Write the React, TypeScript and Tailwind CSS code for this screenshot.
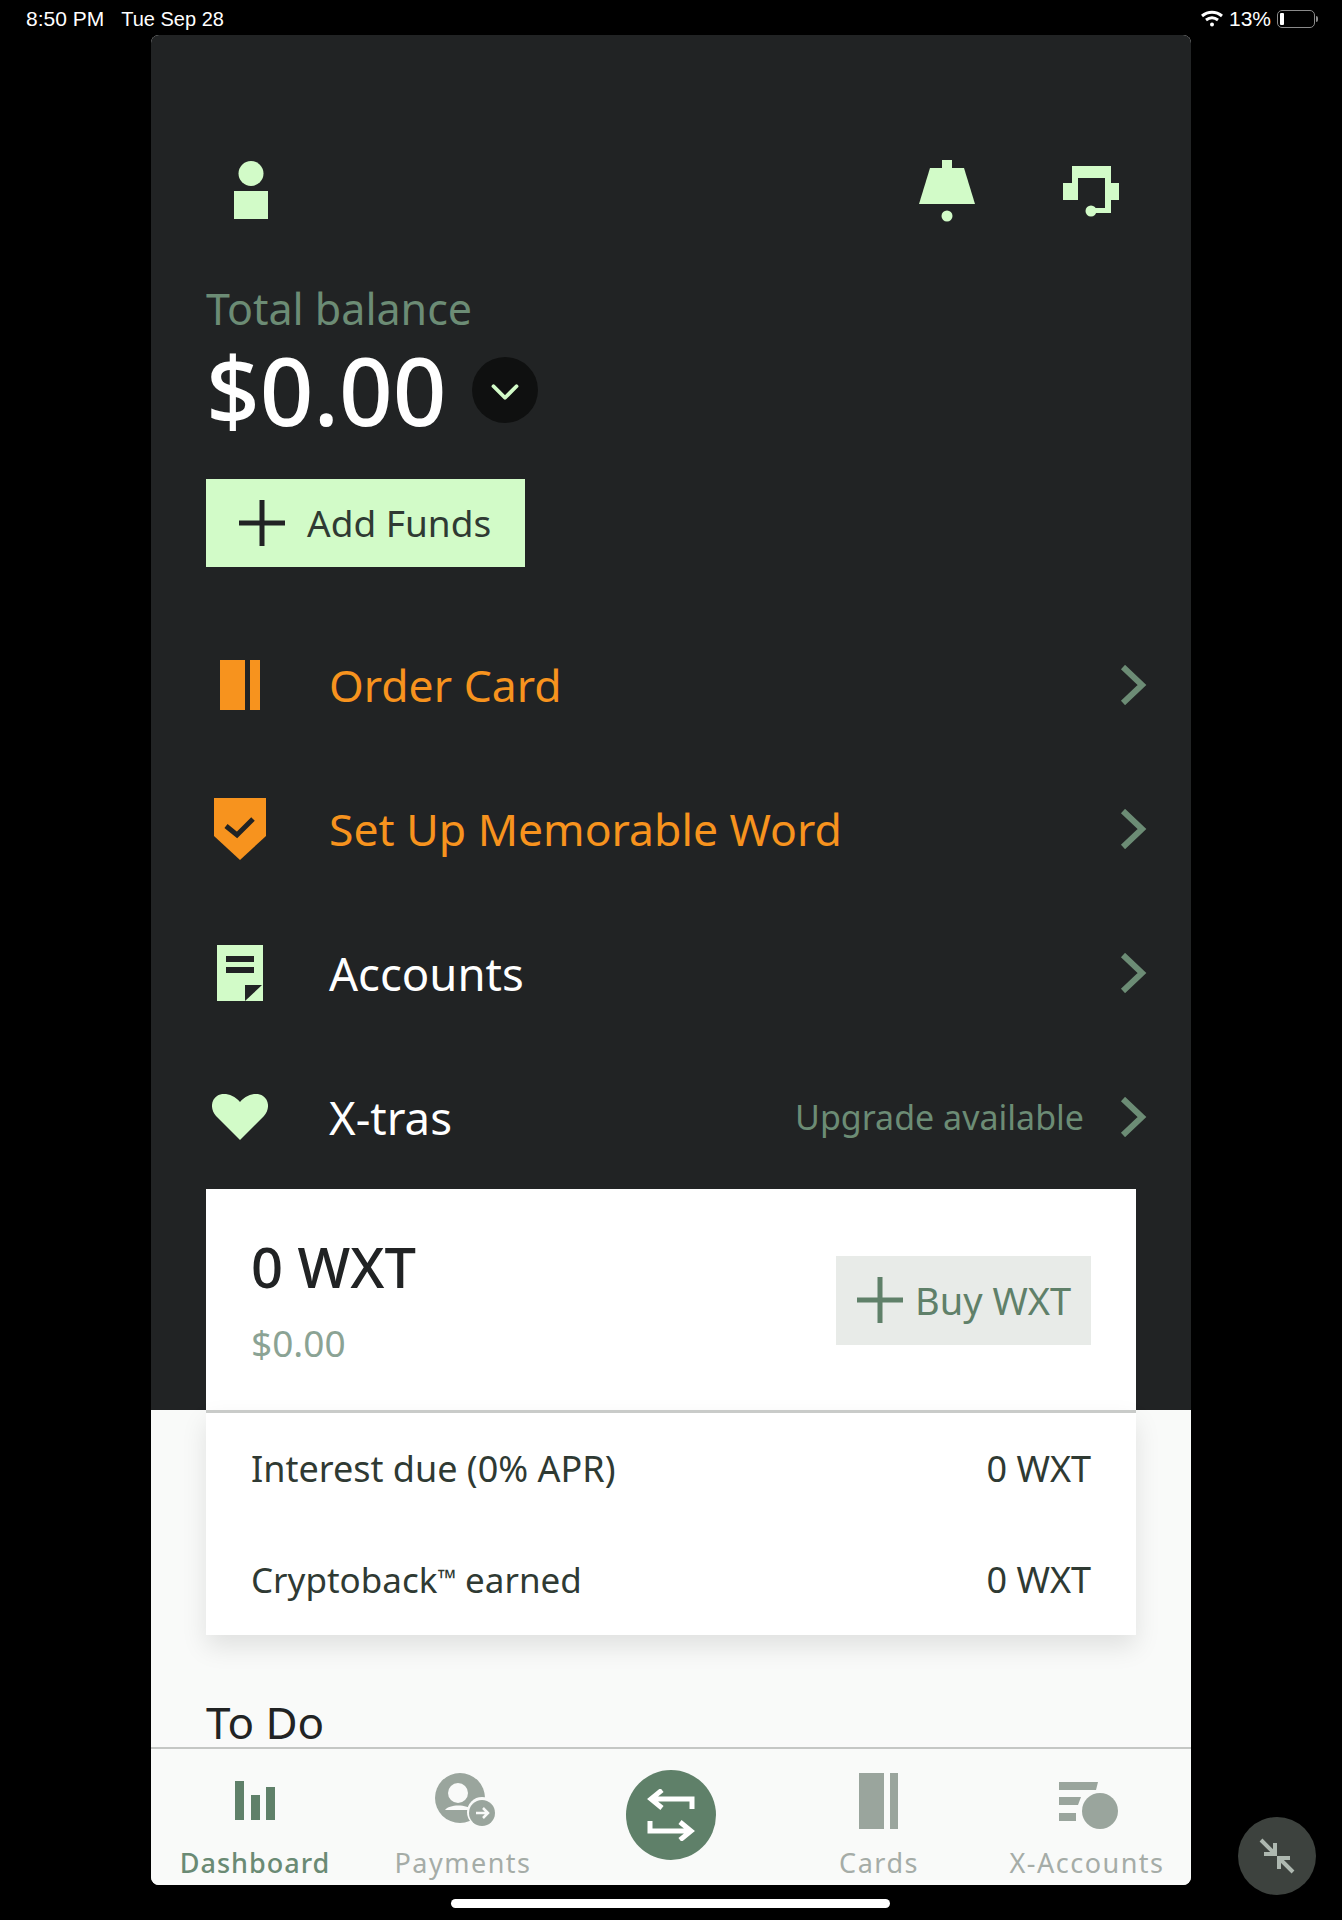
import type { ReactNode } from 'react';
import { ChevronDown } from 'lucide-react';

function PlusIcon({ className }: { className: string }) {
    return (
        <svg width="46" height="46" viewBox="0 0 46 46" className={className}>
            <rect x="0" y="20.5" width="46" height="5" />
            <rect x="20.5" y="0" width="5" height="46" />
        </svg>
    );
}

function PersonIcon() {
    return (
        <svg width="34" height="58" viewBox="0 0 34 58" className="fill-[#d2fbc8]">
            <circle cx="17" cy="12.5" r="12.5" />
            <rect x="0" y="30" width="34" height="28" />
        </svg>
    );
}

function BellIcon() {
    return (
        <svg width="56" height="62" viewBox="0 0 56 62" className="fill-[#d2fbc8] mt-[1px]">
            <rect x="23" y="0" width="10" height="9" />
            <path d="M11 8h34l11 36H0z" />
            <circle cx="28" cy="56" r="5.5" />
        </svg>
    );
}

function SupportIcon() {
    return (
        <svg width="56" height="52" viewBox="0 0 56 52" className="fill-[#d2fbc8] mt-[3px]">
            <rect x="9" y="0" width="39" height="12" />
            <rect x="9" y="12" width="6" height="6" />
            <rect x="42" y="12" width="6" height="35" />
            <rect x="30" y="42" width="18" height="5" />
            <circle cx="28" cy="45" r="5.5" />
            <rect x="0" y="17" width="15" height="17" />
            <rect x="42" y="17" width="14" height="17" />
        </svg>
    );
}

function CardIcon() {
    return (
        <svg width="40" height="50" viewBox="0 0 40 50" className="fill-[#f7931e]">
            <rect x="0" y="0" width="25" height="50" />
            <rect x="30" y="0" width="10" height="50" />
        </svg>
    );
}

function ShieldIcon() {
    return (
        <svg width="52" height="62" viewBox="0 0 52 62">
            <path d="M0 0h52v38L26 62 0 38z" fill="#f7931e" />
            <path d="M12 28l11 9 16-16" fill="none" stroke="#212324" strokeWidth="5" />
        </svg>
    );
}

function AccountsIcon() {
    return (
        <svg width="46" height="56" viewBox="0 0 46 56">
            <path d="M0 0h46v56H0z" fill="#d2fbc8" />
            <rect x="9" y="11" width="28" height="6" fill="#212324" />
            <rect x="9" y="22" width="28" height="6" fill="#212324" />
            <path d="M28 56V40h17z" fill="#212324" />
        </svg>
    );
}

function HeartIcon() {
    return (
        <svg width="56" height="46" viewBox="0 0 56 46" className="fill-[#d2fbc8]">
            <path d="M28 46L4 22C-2 15-1 6 5 2c6-4 16-2 23 6 7-8 17-10 23-6 6 4 7 13 1 20z" />
        </svg>
    );
}

function RowChevron() {
    return (
        <svg width="28" height="40" viewBox="0 0 28 40" fill="none" stroke="#6c8c75" strokeWidth="6" className="mr-[-11px]">
            <path d="M4 2l19 18L4 38" />
        </svg>
    );
}

function MenuRow({
    icon,
    label,
    orange,
    note,
}: {
    icon: ReactNode;
    label: string;
    orange?: boolean;
    note?: string;
}) {
    return (
        <div className="flex items-center h-[144px]">
            <div className="w-[68px] flex justify-center shrink-0">{icon}</div>
            <span className={orange ? 'ml-[55px] text-[44.5px] text-[#f7931e]' : 'ml-[55px] text-[45.5px] text-white'}>{label}</span>
            <div className="ml-auto flex items-center">
                {note && <span className="text-[34px] text-[#6c8c75] mr-[35px]">{note}</span>}
                <RowChevron />
            </div>
        </div>
    );
}

function NavItem({
    icon,
    label,
    active,
}: {
    icon: ReactNode;
    label: string;
    active?: boolean;
}) {
    return (
        <div className="flex flex-col items-center">
            <div className="h-[80px] flex items-end justify-center">{icon}</div>
            <span className={`mt-[16px] leading-[36px] text-[27px] ${active ? 'tracking-[1px] font-medium text-[#6a8a74]' : 'tracking-[1.5px] text-[#a5aca7]'}`}>{label}</span>
        </div>
    );
}

export default function App() {
    return (
        <div className="relative w-[1342px] h-[1920px] bg-black overflow-hidden font-['Noto_Sans',sans-serif]">
            {/* Status bar */}
            <div className="h-[35px] pt-[2px] flex items-center justify-between pl-[26px] pr-[24px] text-white text-[21px] font-['Liberation_Sans',sans-serif]">
                <div className="flex items-center gap-[17px]">
                    <span>8:50 PM</span>
                    <span className="text-[20px]">Tue Sep 28</span>
                </div>
                <div className="flex items-center gap-[6px]">
                    <svg width="22" height="18" viewBox="0 0 22 18" fill="none" stroke="#fff" strokeWidth="3">
                        <path d="M1 6c6-5 14-5 20 0M5 10c4-3 8-3 12 0" />
                        <circle cx="11" cy="14.5" r="2" fill="#fff" stroke="none" />
                    </svg>
                    <span>13%</span>
                    <div className="flex items-center">
                        <div className="w-[38px] h-[18px] rounded-[5px] border border-[#8a8a8a] p-[2px]">
                            <div className="w-[4px] h-full bg-white rounded-[1px]" />
                        </div>
                        <div className="w-[2px] h-[6px] ml-[1px] bg-[#8a8a8a] rounded-r-full" />
                    </div>
                </div>
            </div>

            <div className="w-[1040px] h-[1850px] ml-[151px] rounded-[8px] overflow-hidden flex flex-col bg-[#f9faf9]">
                {/* Dark top section */}
                <div className="h-[1375px] shrink-0 bg-[#212324] px-[55px]">
                    <div className="flex items-center justify-between pt-[125px] pl-[28px] pr-[17px] h-[185px]">
                        <PersonIcon />
                        <div className="flex items-center gap-[88px]">
                            <BellIcon />
                            <SupportIcon />
                        </div>
                    </div>
                    <p className="mt-[64px] h-[50px] leading-[50px] text-[43px] text-[#6c8c75]">Total balance</p>
                    <div className="flex items-center h-[92px] mt-[10px]">
                        <span className="text-[94px] font-medium text-white leading-none">$0.00</span>
                        <div className="ml-[25px] w-[66px] h-[66px] rounded-full bg-[#0f1010] flex items-center justify-center">
                            <ChevronDown className="w-[46px] h-[46px] mt-[3px] text-[#d2fbc8]" strokeWidth={2} />
                        </div>
                    </div>
                    <div className="mt-[43px] w-[319px] h-[88px] bg-[#d2fbc8] flex items-center pl-[33px]">
                        <PlusIcon className="fill-[#212324]" />
                        <span className="ml-[22px] text-[37px] text-[#2f3a33]">Add Funds</span>
                    </div>
                    <div className="mt-[46px]">
                        <MenuRow icon={<CardIcon />} label="Order Card" orange />
                        <MenuRow icon={<ShieldIcon />} label="Set Up Memorable Word" orange />
                        <MenuRow icon={<AccountsIcon />} label="Accounts" />
                        <MenuRow icon={<HeartIcon />} label="X-tras" note="Upgrade available" />
                    </div>
                    {/* WXT card, top half */}
                    <div className="w-[930px] h-[222px] bg-white flex items-center justify-between pl-[45px] pr-[45px]">
                        <div>
                            <p className="text-[56px] font-medium text-[#212324] leading-[60px]">0 WXT</p>
                            <p className="mt-[25px] text-[37px] text-[#8ba394] leading-[44px]">$0.00</p>
                        </div>
                        <div className="w-[255px] h-[89px] bg-[#e8ebe8] flex items-center pl-[21px]">
                            <PlusIcon className="fill-[#5f8069]" />
                            <span className="ml-[12px] text-[38px] text-[#5f8069]">Buy WXT</span>
                        </div>
                    </div>
                </div>

                {/* WXT card, lower half */}
                <div className="flex-1 min-h-0 px-[55px]">
                    <div className="w-[930px] h-[225px] bg-white border-t-[3px] border-[#c9cbc9] shadow-[0_12px_24px_rgba(0,0,0,0.1)] px-[45px] pt-[32px]">
                        <div className="flex justify-between text-[36px] text-[#2f3a33] h-[48px] leading-[48px]">
                            <span>Interest due (0% APR)</span>
                            <span>0 WXT</span>
                        </div>
                        <div className="flex justify-between text-[36px] text-[#2f3a33] h-[48px] leading-[48px] mt-[63px]">
                            <span className="text-[35px]">Cryptoback<span className="text-[24px] leading-none align-[6px]">™</span> earned</span>
                            <span>0 WXT</span>
                        </div>
                    </div>
                    <p className="mt-[61px] text-[44px] leading-[52px] text-[#212324]">To Do</p>
                </div>

                {/* Bottom nav */}
                <div className="h-[138px] shrink-0 border-t-[2px] border-[#c4c7c4] bg-[#f9faf9] grid grid-cols-5">
                    <NavItem
                        active
                        label="Dashboard"
                        icon={
                            <svg width="40" height="39" viewBox="0 0 40 39" className="fill-[#5f8069] mb-[9px]">
                                <rect x="0" y="0" width="9" height="39" />
                                <rect x="16" y="14" width="9" height="25" />
                                <rect x="31" y="6" width="9" height="33" />
                            </svg>
                        }
                    />
                    <NavItem
                        label="Payments"
                        icon={
                            <svg width="62" height="54" viewBox="0 0 62 54" className="mb-[2px] ml-[6px]">
                                <circle cx="25" cy="25" r="25" fill="#9aa59d" />
                                <circle cx="23" cy="20" r="10" fill="#f9faf9" />
                                <path d="M10 37c4-6 22-6 28 0z" fill="#f9faf9" />
                                <circle cx="47" cy="39" r="15" fill="#f9faf9" />
                                <circle cx="47" cy="40" r="13" fill="#9aa59d" />
                                <path d="M41 40h11M48 35l5 5-5 5" fill="none" stroke="#f9faf9" strokeWidth="2.5" />
                            </svg>
                        }
                    />
                    <div className="flex justify-center pt-[21px]">
                        <div className="w-[90px] h-[90px] rounded-full bg-[#5f8069] flex items-center justify-center">
                            <svg width="50" height="52" viewBox="0 0 50 52" fill="none" stroke="#fff" strokeWidth="5">
                                <path d="M46 20V10H6M16 1L5 10l11 9" />
                                <path d="M4 32v10h40M34 33l11 9-11 9" />
                            </svg>
                        </div>
                    </div>
                    <NavItem
                        label="Cards"
                        icon={
                            <svg width="39" height="56" viewBox="0 0 39 56" className="fill-[#9aa59d] mr-[2px]">
                                <rect x="0" y="0" width="25" height="56" />
                                <rect x="31" y="0" width="8" height="56" />
                            </svg>
                        }
                    />
                    <NavItem
                        label="X-Accounts"
                        icon={
                            <svg width="59" height="47" viewBox="0 0 59 47" className="fill-[#9aa59d] ml-[3px]">
                                <path d="M0 0h39l-2 8H0z" />
                                <path d="M0 15h22l-3 8H0z" />
                                <rect x="0" y="31" width="17" height="8" />
                                <circle cx="41" cy="29" r="18" />
                            </svg>
                        }
                    />
                </div>
            </div>

            {/* Home indicator */}
            <div className="w-[439px] h-[9px] mt-[14px] ml-[451px] rounded-full bg-white" />

            {/* Floating collapse button */}
            <div className="absolute left-[1238px] top-[1817px] w-[78px] h-[78px] rounded-full bg-[#3d423e] flex items-center justify-center">
                <svg width="36" height="36" viewBox="0 0 36 36" fill="none" stroke="#aeb8b0" strokeWidth="4">
                    <path d="M2 2l14 14M16 5v11H5" />
                    <path d="M34 34L20 20M20 31V20h11" />
                </svg>
            </div>
        </div>
    );
}
